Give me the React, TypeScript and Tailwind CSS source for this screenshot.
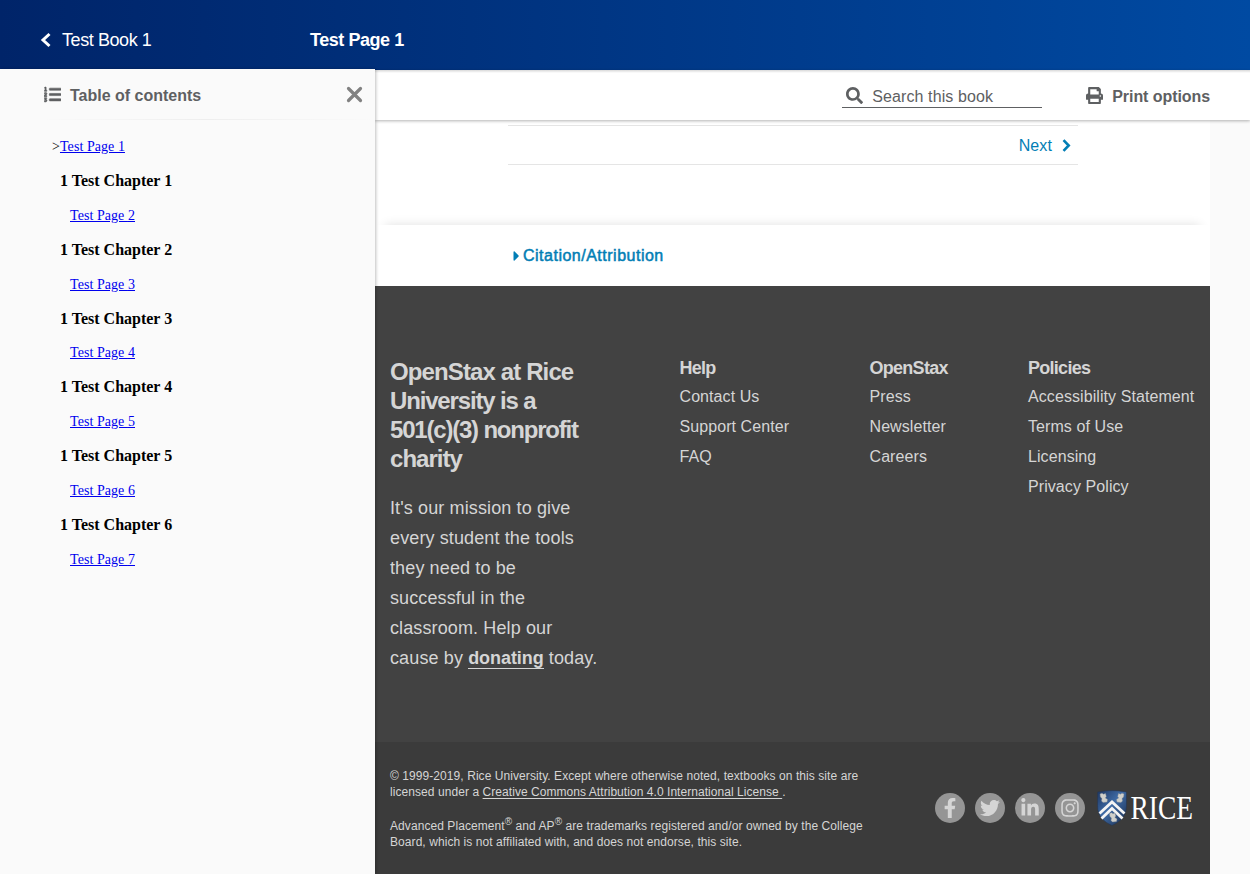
import React from "react";
import {
  FaCaretRight,
  FaFacebookF,
  FaInstagram,
  FaLinkedinIn,
  FaListOl,
  FaPrint,
  FaSearch,
  FaTwitter,
} from "react-icons/fa";

const chapters = [1, 2, 3, 4, 5, 6];

function Header() {
  return (
    <header className="flex h-[70px] shrink-0 items-center bg-linear-to-r from-[#002469] to-[#004aa2] pt-[10px] pl-10 text-[18px] text-white">
      <div className="flex w-[270px] items-center">
        <svg width="12" height="16" viewBox="0 0 12 16" className="mr-2.5">
          <path d="M9.500 2L3 8l6.500 6" fill="none" stroke="currentColor" strokeWidth="3" />
        </svg>
        <span className="tracking-[-0.42px]">Test Book 1</span>
      </div>
      <h1 className="font-bold tracking-[-0.45px]">Test Page 1</h1>
    </header>
  );
}

function Sidebar() {
  return (
    <aside className="relative z-20 -mt-px w-[375px] shrink-0 bg-[#fafafa] shadow-[1px_0_3px_rgba(0,0,0,0.25)]">
      <div className="flex h-[50px] items-center pl-11 pr-3 pt-px text-[#5e6062]">
        <FaListOl className="mr-[9px] h-[17px] w-[17px] stroke-current stroke-[18px]" />
        <h2 className="pt-0.5 text-[16px] font-bold leading-5">Table of contents</h2>
        <svg width="17" height="17" viewBox="0 0 17 17" className="ml-auto text-[#818181]">
          <path d="M2.500 2.500l12 12M14.500 2.500l-12 12" stroke="currentColor" strokeWidth="3.200" strokeLinecap="round" />
        </svg>
      </div>
      <div className="ml-10 h-px bg-linear-to-r from-transparent via-[#eeeeee] to-transparent" />
      <nav className="pl-[60px] pt-[19px] font-['Liberation_Serif',serif] text-[14px] tracking-[0.06px]">
        <div className="-ml-2 h-4 leading-4">
          &gt;<a className="text-[#0000ee] underline">Test Page 1</a>
        </div>
        {chapters.map((n) => (
          <div key={n} className="h-[68.8px] pt-[17px] text-black">
            <h3 className="h-[18px] text-[16px] font-bold leading-[18px] tracking-normal">1 Test Chapter {n}</h3>
            <div className="pl-2.5 pt-[17.8px] leading-4">
              <a className="text-[#0000ee] underline">Test Page {n + 1}</a>
            </div>
          </div>
        ))}
      </nav>
    </aside>
  );
}

function Toolbar() {
  return (
    <div className="relative z-10 flex h-[50px] shrink-0 items-center justify-end bg-white pr-10 text-[16px] text-[#5e6062] shadow-[0_1px_3px_rgba(0,0,0,0.3)]">
      <div className="mr-11 mt-0.5 flex h-6 w-[200px] items-center border-b border-[#5e6062] pl-1">
        <FaSearch className="mr-[9px] h-[17px] w-[17px]" />
        <span className="pt-0.5 tracking-[0.1px]">Search this book</span>
      </div>
      <FaPrint className="mr-[9px] h-[17px] w-[17px]" />
      <span className="pt-[3px] font-bold tracking-[-0.07px]">Print options</span>
      <div className="absolute inset-x-0 top-0 h-[3px] bg-linear-to-b from-black/15 to-transparent" />
    </div>
  );
}

function LinkColumn({ title, links }: { title: string; links: string[] }) {
  return (
    <div>
      <h3 className="h-[30px] text-[18px] font-bold leading-[30px] tracking-[-0.72px]">{title}</h3>
      <ul>
        {links.map((l) => (
          <li key={l} className="h-[30px] whitespace-nowrap text-[16px] leading-7 tracking-[0.08px]">
            {l}
          </li>
        ))}
      </ul>
    </div>
  );
}

function Shield() {
  return (
    <svg width="30" height="36" viewBox="0 0 30 36">
      <defs>
        <linearGradient id="shield" x1="0" y1="0" x2="1" y2="1">
          <stop offset="0" stopColor="#1d3560" />
          <stop offset="0.45" stopColor="#3f6ba5" />
          <stop offset="1" stopColor="#182b4c" />
        </linearGradient>
      </defs>
      <path d="M.5 2Q8 .5 15 .5T29.500 2V16C29.500 26 23 32 15 35.500C7 32 .5 26 .5 16Z" fill="url(#shield)" stroke="#27364f" strokeWidth=".6" />
      <path d="M2.500 23.500L15 12L27.500 23.500M4.500 28.500L15 18.500L25.500 28.500" fill="none" stroke="#f4f4f4" strokeWidth="2.800" />
      <g fill="#cfcfca" stroke="#8a9096" strokeWidth=".4">
        <path d="M3 4l2-.8 1.500 1 2-.8.8 3-1 1.500 2.200 1.500-.5 2.600-4 .4-1.500-1.500.5-2.400-1.600-1.500z" />
        <path d="M27 4l-2-.8-1.500 1-2-.8-.8 3 1 1.500-2.200 1.500.5 2.600 4 .4 1.500-1.500-.5-2.400 1.600-1.500z" />
        <path d="M12.500 23.500l2-.8 1.500 1 2-.8.8 3-1 1.500 2.200 1.500-.5 2.600-4 .4-1.500-1.500.5-2.400-1.600-1.500z" />
      </g>
    </svg>
  );
}

function Footer() {
  return (
    <footer className="flex flex-1 flex-col bg-[#424242] text-[#d5d5d5]">
      <div className="grid h-[456px] grid-cols-[289.500px_190px_158.500px_1fr] pl-[15px] pt-[67px]">
        <div className="pt-1">
          <h2 className="w-[215px] text-[24px] font-bold leading-[29px]">
            <span className="tracking-[-0.88px]">OpenStax at Rice</span>
            <br />
            <span className="tracking-[-1.16px]">University is a</span>
            <br />
            <span className="tracking-[-1.200px]">501(c)(3) nonprofit</span>
            <br />
            <span className="tracking-[-0.96px]">charity</span>
          </h2>
          <p className="mt-5 text-[18px] leading-[30px] tracking-[0.12px]">
            It's our mission to give
            <br />
            every student the tools
            <br />
            they need to be
            <br />
            successful in the
            <br />
            classroom. Help our
            <br />
            cause by <a className="border-b border-[#d5d5d5] font-bold tracking-[-0.05px]">donating</a> today.
          </p>
        </div>
        <LinkColumn title="Help" links={["Contact Us", "Support Center", "FAQ"]} />
        <LinkColumn title="OpenStax" links={["Press", "Newsletter", "Careers"]} />
        <LinkColumn title="Policies" links={["Accessibility Statement", "Terms of Use", "Licensing", "Privacy Policy"]} />
      </div>
      <div className="flex flex-1 items-center bg-[#3b3b3b] pl-[15px] pr-[15px]">
        <div className="whitespace-nowrap pt-0.5 text-[12px] leading-4 tracking-[0.07px]">
          <p>
            © 1999-2019, Rice University. Except where otherwise noted, textbooks on this site are
            <br />
            licensed under a <a className="tracking-[0.05px] underline underline-offset-2">Creative Commons Attribution 4.0 International License </a>.
          </p>
          <p className="mt-[18px]">
            Advanced Placement<sup className="text-[10px] leading-none">®</sup> and AP<sup className="text-[10px] leading-none">®</sup> are trademarks registered and/or owned by the College
            <br />
            Board, which is not affiliated with, and does not endorse, this site.
          </p>
        </div>
        <div className="ml-auto flex items-center gap-2.5">
          {[FaFacebookF, FaTwitter, FaLinkedinIn, FaInstagram].map((Icon, i) => (
            <span key={i} className="flex h-[30px] w-[30px] items-center justify-center rounded-full bg-[#959595] text-[#d5d5d5]">
              <Icon className="h-5 w-5" />
            </span>
          ))}
          <div className="ml-0.5 flex h-9 w-[98px] items-center">
            <Shield />
            <svg width="67" height="44" viewBox="0 0 67 44" className="ml-px shrink-0 overflow-visible">
              <text x="2.500" y="33" textLength="62.500" lengthAdjust="spacingAndGlyphs" fontSize="34.500" fontFamily="Liberation Serif" fill="#fff">
                RICE
              </text>
            </svg>
          </div>
        </div>
      </div>
    </footer>
  );
}

export default function App() {
  return (
    <div className="flex h-[874px] w-[1250px] flex-col overflow-hidden bg-[#fafafa] font-['Liberation_Sans',sans-serif]">
      <Header />
      <div className="flex min-h-0 flex-1">
        <Sidebar />
        <div className="flex min-w-0 flex-1 flex-col">
          <Toolbar />
          <main className="mr-10 flex flex-1 flex-col bg-white">
            <div className="h-[105px] pt-[5px]">
              <div className="ml-[133px] flex h-10 w-[570px] items-center justify-end border-y border-[#e5e5e5] pr-[7px] text-[16px] text-[#027eb5]">
                <span className="pt-0.5 tracking-[0.1px]">Next</span>
                <svg width="9" height="13" viewBox="0 0 9 13" className="ml-2.5">
                  <path d="M1.500 1.200L6.700 6.500L1.500 11.800" fill="none" stroke="currentColor" strokeWidth="2.600" />
                </svg>
              </div>
            </div>
            <div className="flex h-[61px] items-center pl-[138px] text-[#027eb5] shadow-[0_-10px_10px_-10px_rgba(0,0,0,0.12)]">
              <FaCaretRight className="mr-[3px] h-4 w-[7px]" />
              <span className="text-[16px] tracking-[0.5px] [-webkit-text-stroke:0.5px_#027eb5]">Citation/Attribution</span>
            </div>
            <Footer />
          </main>
        </div>
      </div>
    </div>
  );
}
